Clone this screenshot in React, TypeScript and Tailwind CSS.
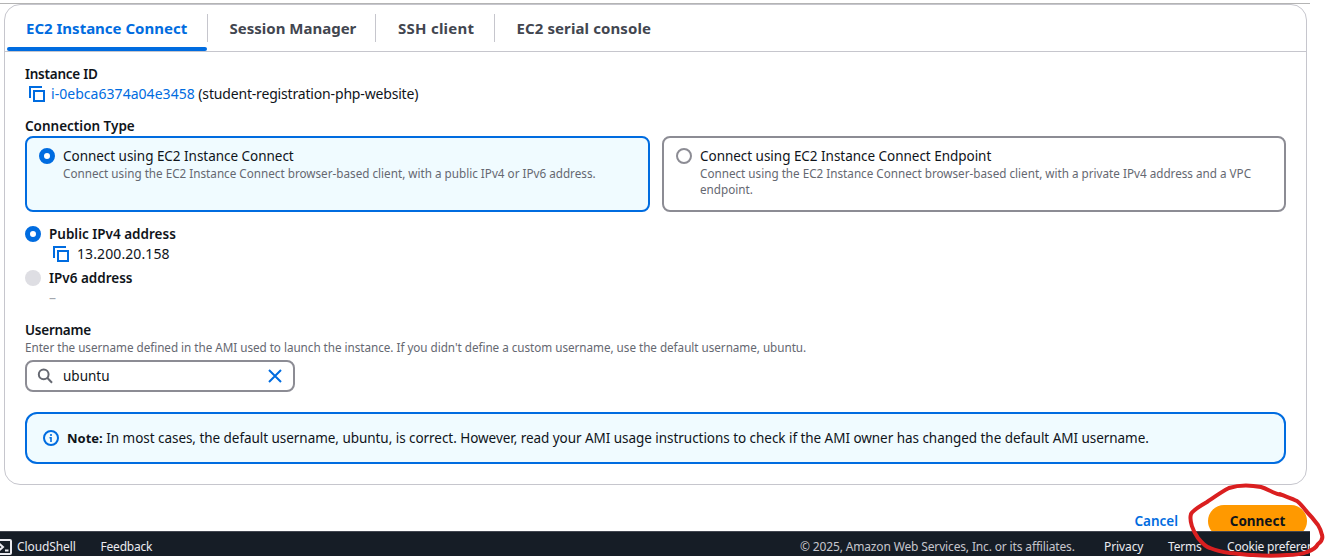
import React from "react";

const tabs = [
  { label: "EC2 Instance Connect", box: "w-[203px] pl-[21px]", text: "tracking-[0px]" },
  { label: "Session Manager", box: "w-[168px] pl-[21.5px]", text: "tracking-[0px]" },
  { label: "SSH client", box: "w-[119px] pl-[22px]", text: "tracking-[0.25px]" },
  { label: "EC2 serial console", box: "w-[200px] pl-[21.5px]", text: "tracking-[0.1px]" },
];

function CopyIcon() {
  return (
    <svg width="16" height="16" viewBox="0 0 16 16" fill="none" stroke="#006ce0" strokeWidth="2" className="shrink-0">
      <path d="M1 12V1h12" />
      <path d="M5 5h10v10H5z" />
    </svg>
  );
}

function Radio({ state }: { state: "on" | "off" | "disabled" }) {
  if (state === "on") return <span className="h-4 w-4 shrink-0 rounded-full border-[5px] border-[#006ce0] bg-white" />;
  if (state === "off") return <span className="h-4 w-4 shrink-0 rounded-full border-2 border-[#8c8c94] bg-white" />;
  return <span className="h-4 w-4 shrink-0 rounded-full bg-[#dedee3]" />;
}

export default function App() {
  return (
    <div className="relative flex h-[559px] w-[1326px] flex-col overflow-hidden bg-white pt-[3px] font-['Noto_Sans',sans-serif] text-sm leading-5 whitespace-nowrap text-[#0f141a]">
      <div className="h-px w-[1310px] shrink-0 bg-[#b4b4b4]" />
      <section className="ml-1 flex h-[481px] w-[1303px] shrink-0 flex-col rounded-2xl border border-[#c6c6cd]">
        <nav className="flex h-[47px] shrink-0 border-b border-[#c6c6cd]">
          {tabs.map((tab, i) => (
            <div key={tab.label} className={"relative flex pt-3 text-[15px] leading-[22px] font-bold " + tab.box + (i === 0 ? " text-[#006ce0]" : " text-[#424650]")}>
              <span className={tab.text}>{tab.label}</span>
              {i < 3 && <span className="absolute top-[9px] right-0 h-7 w-px bg-[#c6c6cd]" />}
              {i === 0 && <span className="absolute bottom-0 left-[2px] h-1 w-[200px] rounded-[3px] bg-[#006ce0]" />}
            </div>
          ))}
        </nav>
        <div className="flex flex-col pt-3 pr-5 pl-5">
          <div className="h-5 text-[13.5px] leading-5 font-semibold"><span className="tracking-[-0.25px]">Instance ID</span></div>
          <div className="flex h-5 items-center pl-1">
            <CopyIcon />
            <span className="ml-[6px] tracking-[0.04px] text-[#006ce0]">i-0ebca6374a04e3458</span>
            <span className="ml-[3.5px] tracking-[-0.17px]">(student-registration-php-website)</span>
          </div>
          <div className="mt-3 h-5 text-[13.5px] leading-5 font-semibold"><span className="tracking-[0px]">Connection Type</span></div>
          <div className="flex h-[76px] gap-3">
            <div className="flex w-[625px] gap-2 rounded-lg border-2 border-[#006ce0] bg-[#f0fbff] px-3 pt-2">
              <span className="flex h-5 items-center"><Radio state="on" /></span>
              <div>
                <div className="text-[13.5px] leading-5 tracking-[-0.03px]">Connect using EC2 Instance Connect</div>
                <div className="-mt-px text-[11.7px] leading-4 text-[#656871]">Connect using the EC2 Instance Connect browser-based client, with a public IPv4 or IPv6 address.</div>
              </div>
            </div>
            <div className="flex w-[624px] gap-2 rounded-lg border-2 border-[#8c8c94] px-3 pt-2">
              <span className="flex h-5 items-center"><Radio state="off" /></span>
              <div>
                <div className="text-[13.5px] leading-5 tracking-[-0.03px]">Connect using EC2 Instance Connect Endpoint</div>
                <div className="-mt-px text-[11.7px] leading-4 text-[#656871]">Connect using the EC2 Instance Connect browser-based client, with a private IPv4 address and a VPC<br />endpoint.</div>
              </div>
            </div>
          </div>
          <div className="mt-3 flex h-5 items-center gap-2 text-[13.5px] leading-5 font-semibold"><Radio state="on" /><span className="tracking-[0px]">Public IPv4 address</span></div>
          <div className="flex h-5 items-center gap-2 pl-7"><CopyIcon /><span className="tracking-[0.1px]">13.200.20.158</span></div>
          <div className="mt-1 flex h-5 items-center gap-2 text-[13.5px] leading-5 font-semibold"><Radio state="disabled" /><span className="tracking-[0px]">IPv6 address</span></div>
          <div className="h-5 pl-6 text-[#a4a7ae]">–</div>
          <div className="mt-3 h-5 text-[13.5px] leading-5 font-semibold"><span className="tracking-[-0.25px]">Username</span></div>
          <div className="h-4 text-[11.7px] leading-[14px] text-[#656871]"><span className="tracking-[-0.03px]">Enter the username defined in the AMI used to launch the instance. If you didn't define a custom username, use the default username, ubuntu.</span></div>
          <div className="mt-1 flex h-8 w-[270px] items-center rounded-lg border-2 border-[#8c8c94] pr-[10px] pl-[10px]">
            <svg width="16" height="16" viewBox="0 0 16 16" fill="none" stroke="#656871" strokeWidth="2">
              <circle cx="6.7" cy="6.3" r="4.9" />
              <path d="M10.2 9.8 15 14.8" />
            </svg>
            <span className="ml-[10px] flex-1 text-[13.5px] leading-5">ubuntu</span>
            <svg width="16" height="16" viewBox="0 0 16 16" fill="none" stroke="#006ce0" strokeWidth="2">
              <path d="m2 2 12 12M14 2 2 14" />
            </svg>
          </div>
          <div className="mt-5 flex h-[52px] items-center rounded-xl border-2 border-[#006ce0] bg-[#f0fbff] pl-4">
            <svg width="16" height="16" viewBox="0 0 16 16" fill="none" stroke="#006ce0" strokeWidth="2">
              <circle cx="8" cy="8" r="7" />
              <path d="M8 4v2M8 7v5M6.5 7.8H8" strokeWidth="1.6" />
            </svg>
            <div className="ml-2 text-[13.5px] leading-5"><b className="text-[13px]">Note:</b> <span className="tracking-[-0.045px]">In most cases, the default username, ubuntu, is correct. However, read your AMI usage instructions to check if the AMI owner has changed the default AMI username.</span></div>
          </div>
        </div>
      </section>
      <div className="mt-5 flex h-[26px] w-[1307px] shrink-0 justify-end overflow-hidden text-[13.5px] leading-5 font-semibold">
        <span className="mt-[6px] mr-[30px] tracking-[0px] text-[#006ce0]">Cancel</span>
        <button className="h-8 w-[99px] shrink-0 rounded-full bg-[#ff9900] font-bold tracking-[0px]">Connect</button>
      </div>
      <footer className="flex h-[25px] w-[1310px] shrink-0 overflow-hidden border-t border-[#424650] bg-[#161d26] pt-[5px] text-xs leading-5 text-[#ebebf0]">
        <svg width="16" height="16" viewBox="0 0 16 16" fill="none" stroke="currentColor" strokeWidth="2" className="mt-[2px] -ml-1 shrink-0">
          <rect x="1" y="1" width="14" height="14" rx="1" />
          <path d="m3 4.5 4 3.5-4 3.5M9 11.5h3.5" />
        </svg>
        <span className="ml-[5px] w-[83.5px] shrink-0 tracking-[-0.1px]">CloudShell</span>
        <span className="w-[699.5px] shrink-0 tracking-[-0.2px]">Feedback</span>
        <span className="w-[304px] shrink-0 tracking-[-0.15px] text-[#c6c6cd]">© 2025, Amazon Web Services, Inc. or its affiliates.</span>
        <span className="w-16 shrink-0 tracking-[-0.1px]">Privacy</span>
        <span className="w-[59px] shrink-0 tracking-[-0.2px]">Terms</span>
        <span className="shrink-0 tracking-[-0.2px]">Cookie preferences</span>
      </footer>
      <svg className="pointer-events-none absolute top-[470px] left-[1180px]" width="146" height="89" viewBox="0 0 146 89" fill="none" stroke="#da1f20" strokeWidth="4" strokeLinecap="round" strokeLinejoin="round">
        <path d="M102 25C94 24 88 19 81 17C71 15 58 15 49 18C41 22 33 28 27 32C20 36 13 40 11 44C9 51 13 61 18 68C22 73 26 77 30 78C37 81 43 82 50 83C60 84 67 85 73 85C85 86 97 86 107 85C116 85 122 84 127 82C133 80 136 78 138 74C142 71 143 68 142 65C141 61 140 58 138 55C135 51 131 46 127 42C124 38 121 34 117 31C111 28 104 26 100 24" />
      </svg>
    </div>
  );
}
